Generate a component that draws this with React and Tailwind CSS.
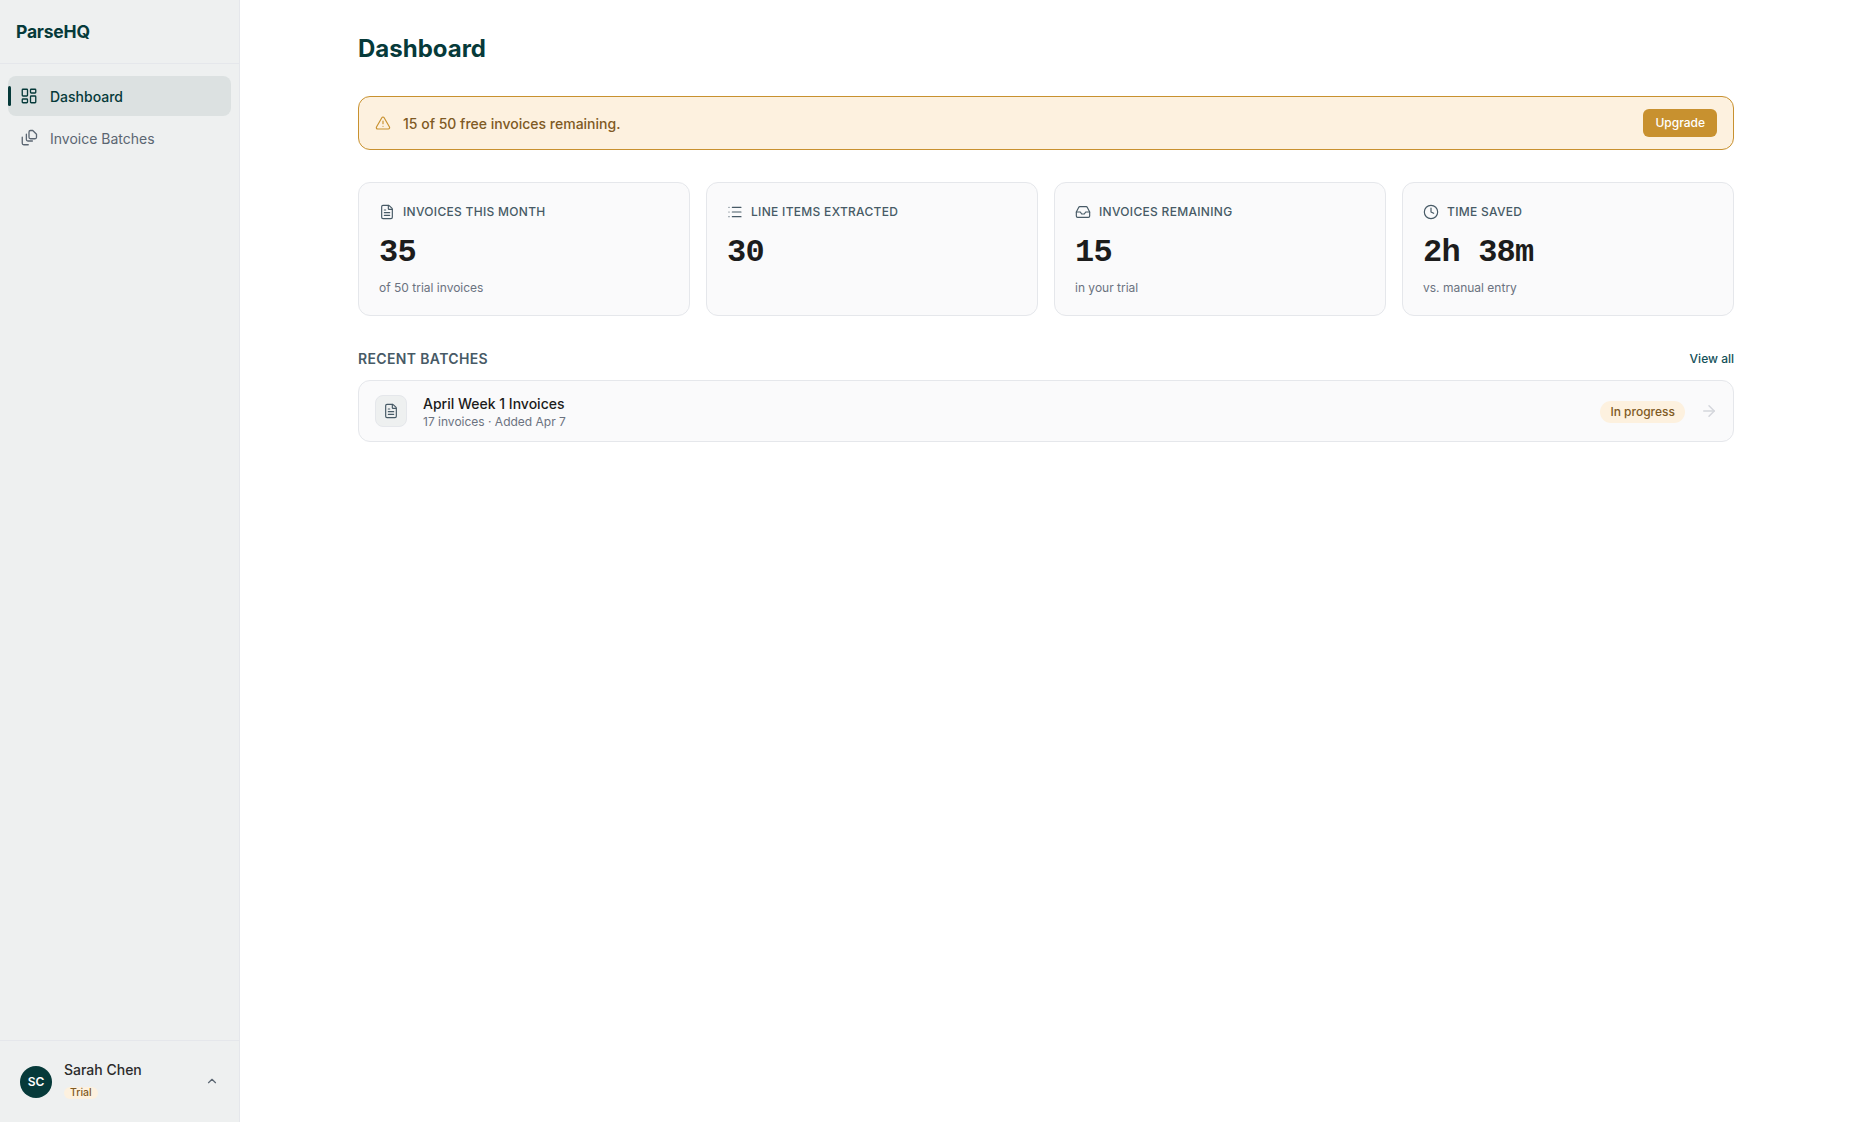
import React from 'react';
import { LayoutDashboard, TriangleAlert, FileText, List, Inbox, Clock, ArrowRight, ChevronUp } from 'lucide-react';

const stats = [
  { icon: FileText, label: 'Invoices this month', value: '35', note: 'of 50 trial invoices' },
  { icon: List, label: 'Line items extracted', value: '30', note: '' },
  { icon: Inbox, label: 'Invoices remaining', value: '15', note: 'in your trial' },
  { icon: Clock, label: 'Time saved', value: '2h 38m', note: 'vs. manual entry' },
];

// not in lucide: a page with a fold and two stacked edges behind it
const BatchesIcon = () => (
  <svg width="18" height="18" viewBox="0 0 24 24" fill="none" stroke="currentColor" strokeWidth="1.75" strokeLinecap="round" strokeLinejoin="round">
    <path d="M3 11v8a2 2 0 0 0 2 2h6" />
    <path d="M8.5 7v7a2 2 0 0 0 2 2h6" />
    <path d="M12 11V4a2 2 0 0 1 2-2h3l5 5v4a2 2 0 0 1-2 2h-6a2 2 0 0 1-2-2z" />
  </svg>
);

const StatCard = ({ icon: Icon, label, value, note }) => (
  <div className="h-[134px] rounded-xl border border-[#e5e7eb] bg-[#fafafb] px-[20px] pt-[20px]">
    <div className="flex items-center gap-[8px]">
      <Icon size={16} strokeWidth={1.75} className="text-[#475a66]" />
      <span className="text-[12px] leading-[18px] font-medium uppercase tracking-wide text-[#475a66]">{label}</span>
    </div>
    <div className="mt-[12px] font-['Liberation_Mono',monospace] text-[32px] leading-[40px] font-bold tracking-tight text-[#1c1c1c]">{value}</div>
    <div className="mt-[6px] text-[12px] leading-[18px] text-[#6b7280]">{note}</div>
  </div>
);

export default function App() {
  return (
    <div className="flex min-h-screen bg-white font-['Inter',sans-serif]">
      <aside className="flex h-screen w-[240px] shrink-0 flex-col border-r border-[#e5e7eb] bg-[#eef0f0]">
        <div className="flex h-[64px] items-center border-b border-[#e5e7eb] pl-4 pt-[2px] text-[17.5px] font-bold tracking-[-0.0125em] text-[#063a3a]">ParseHQ</div>
        <nav className="flex flex-1 flex-col gap-[2px] p-2 pt-[12px]">
          <a className="relative flex h-[40px] items-center gap-[12px] rounded-lg bg-[#dce1e1] px-[12px] text-[14px] font-medium text-[#063a3a]">
            <span className="absolute left-0 top-[10px] h-[20px] w-[3px] rounded-full bg-[#063a3a]" />
            <LayoutDashboard size={18} strokeWidth={1.75} />
            Dashboard
          </a>
          <a className="flex h-[40px] items-center gap-[12px] rounded-lg px-[12px] text-[14px] text-[#5b6672]">
            <BatchesIcon />
            Invoice Batches
          </a>
        </nav>
        <div className="flex h-[82px] items-center border-t border-[#e5e7eb] px-[20px]">
          <div className="flex h-[32px] w-[32px] items-center justify-center rounded-full bg-[#063a3a] text-[12px] font-semibold text-white">SC</div>
          <div className="mb-[5px] ml-[12px] flex-1">
            <div className="text-[14px] leading-[20px] font-medium text-[#2b2b2b]">Sarah Chen</div>
            <span className="mt-[7px] block w-fit rounded-full bg-[#fdf1df] px-[6px] text-[10.5px] leading-[12px] font-medium text-[#7f5a24]">Trial</span>
          </div>
          <ChevronUp size={14} className="mb-[2px] text-[#5b6672]" />
        </div>
      </aside>
      <main className="flex-1">
        <div className="mx-auto max-w-[1440px] px-8 pt-[33px]">
          <h1 className="text-[24px] leading-[32px] font-bold text-[#063a3a]">Dashboard</h1>
          <div className="mt-[31px] flex h-[54px] items-center justify-between rounded-xl border border-[#c8912f] bg-[#fdf1df] px-[16px]">
            <div className="flex items-center gap-[12px] text-[14px] font-medium text-[#7f5a24]">
              <TriangleAlert size={16} strokeWidth={1.75} className="text-[#c8912f]" />
              15 of 50 free invoices remaining.
            </div>
            <button className="h-[28px] rounded-md bg-[#c8912f] px-[12px] text-[12px] font-medium text-white">Upgrade</button>
          </div>
          <div className="mt-[32px] grid grid-cols-4 gap-4">
            {stats.map((s) => <StatCard key={s.label} {...s} />)}
          </div>
          <div className="mt-[33px] flex items-center justify-between">
            <h2 className="text-[14px] leading-[20px] font-semibold uppercase tracking-wide text-[#475a66]">Recent Batches</h2>
            <a className="text-[12px] font-medium text-[#135058]">View all</a>
          </div>
          <div className="mt-[11px] flex h-[62px] items-center rounded-xl border border-[#e5e7eb] bg-[#fafafb] pl-[16px] pr-[15px]">
            <div className="flex h-[32px] w-[32px] items-center justify-center rounded-lg border border-[#e5e7eb] bg-[#eef0f0]">
              <FileText size={16} strokeWidth={1.75} className="text-[#475a66]" />
            </div>
            <div className="ml-[16px] flex-1 pt-[2px]">
              <div className="text-[14px] leading-[18px] font-medium text-[#1c1c1c]">April Week 1 Invoices</div>
              <div className="mt-[1px] text-[12px] leading-[16px] text-[#6b7280]">17 invoices · Added Apr 7</div>
            </div>
            <span className="mt-[1px] rounded-full bg-[#fdf1df] px-[10px] py-[2px] text-[12px] font-medium text-[#7f5a24]">In progress</span>
            <ArrowRight size={18} strokeWidth={2} className="ml-[15px] text-[#d4d6dc]" />
          </div>
        </div>
      </main>
    </div>
  );
}
